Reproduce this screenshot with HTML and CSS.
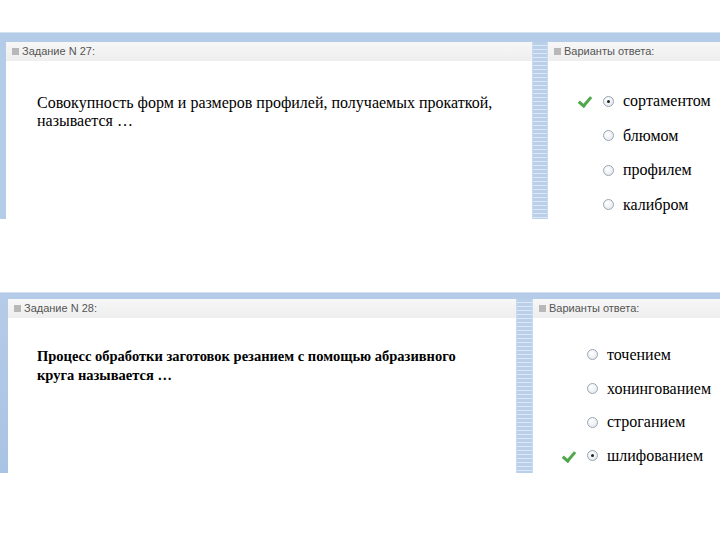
FILE: index.html
```html
<!DOCTYPE html>
<html lang="ru">
<head>
  <meta charset="UTF-8" />
  <title>Тест</title>
  <link rel="stylesheet" href="styles.css">
</head>
<body>

  <div class="slide slide-one">
    <div class="panel question">
      <div class="bar"><span class="box"></span>Задание N 27:</div>
      <p class="text">Совокупность форм и размеров профилей, получаемых прокаткой, называется …</p>
    </div>
    <div class="splitter"></div>
    <div class="panel answers">
      <div class="bar"><span class="box"></span>Варианты ответа:</div>
      <ul class="options">
        <li class="right"><span class="mark"></span><span class="radio on"></span>сортаментом</li>
        <li><span class="mark"></span><span class="radio"></span>блюмом</li>
        <li><span class="mark"></span><span class="radio"></span>профилем</li>
        <li><span class="mark"></span><span class="radio"></span>калибром</li>
      </ul>
    </div>
  </div>

  <div class="slide slide-two">
    <div class="panel question">
      <div class="bar"><span class="box"></span>Задание N 28:</div>
      <p class="text">Процесс обработки заготовок резанием с помощью абразивного круга называется …</p>
    </div>
    <div class="splitter"></div>
    <div class="panel answers">
      <div class="bar"><span class="box"></span>Варианты ответа:</div>
      <ul class="options">
        <li><span class="mark"></span><span class="radio"></span>точением</li>
        <li><span class="mark"></span><span class="radio"></span>хонингованием</li>
        <li><span class="mark"></span><span class="radio"></span>строганием</li>
        <li class="right"><span class="mark"></span><span class="radio on"></span>шлифованием</li>
      </ul>
    </div>
  </div>

</body>
</html>
```

FILE: styles.css
```css
* {
  box-sizing: border-box;
}

body {
  margin: 0;
  background: #fff;
  font-family: "Liberation Serif", "Times New Roman", serif;
}

.slide {
  display: flex;
  background: #b5cce8;
  border-top: 1px solid #d2e0f0;
}

.slide-one {
  margin-top: 32px;
  height: 187px;
  padding: 9px 0 0 6px;
}

.slide-two {
  margin-top: 73px;
  height: 181px;
  padding: 6px 0 0 8px;
  background: linear-gradient(#b5cce8, #a9c3e4);
}

.panel {
  background: #fff;
}

.slide-one .question { width: 526px; }
.slide-one .answers { flex: 1; }
.slide-two .question { width: 508px; }
.slide-two .answers { flex: 1; }

.splitter {
  background: repeating-linear-gradient(#b9cfea 0, #b9cfea 3px, #dde8f5 3px, #dde8f5 4px);
  border-left: 1px solid #c9d9ee;
  border-right: 1px solid #c9d9ee;
}

.slide-one .splitter { width: 16px; }
.slide-two .splitter { width: 17px; }

.bar {
  height: 19px;
  padding: 3px 0 0 6px;
  background: linear-gradient(#f7f7f7, #eeeeee);
  color: #555;
  font-family: "Liberation Sans", Arial, sans-serif;
  font-size: 11px;
}

.box {
  display: inline-block;
  width: 7px;
  height: 7px;
  margin-right: 3px;
  background: #b8b8b8;
}

.text {
  margin: 0;
  color: #000;
  font-size: 16px;
  line-height: 18px;
}

.slide-one .text {
  width: 500px;
  padding: 33px 0 0 31px;
}

.slide-two .text {
  width: 470px;
  padding: 29px 0 0 29px;
  font-weight: bold;
  font-size: 14.5px;
  line-height: 19px;
}

.options {
  list-style: none;
  margin: 0;
  padding: 0;
  font-size: 16px;
  color: #000;
}

.slide-one .options { padding: 23px 0 0 30px; }
.slide-two .options { padding: 20px 0 0 29px; }

.options li {
  display: flex;
  align-items: center;
  height: 34.5px;
}

.slide-two .options li { height: 33.7px; }

.mark {
  width: 14px;
  height: 10px;
  margin-right: 11px;
}

.right .mark {
  position: relative;
}

.right .mark::after {
  content: "";
  position: absolute;
  left: 3px;
  top: -2px;
  width: 5px;
  height: 10px;
  border-right: 3px solid #4fa84a;
  border-bottom: 3px solid #4fa84a;
  transform: rotate(40deg);
}

.radio {
  width: 11px;
  height: 11px;
  margin-right: 9px;
  border: 1px solid #9aa6b4;
  border-radius: 50%;
  background: radial-gradient(circle at 40% 35%, #fff, #dfe4ea);
  position: relative;
}

.radio.on::after {
  content: "";
  position: absolute;
  left: 3px;
  top: 3px;
  width: 3px;
  height: 3px;
  border-radius: 50%;
  background: #222;
}
```
